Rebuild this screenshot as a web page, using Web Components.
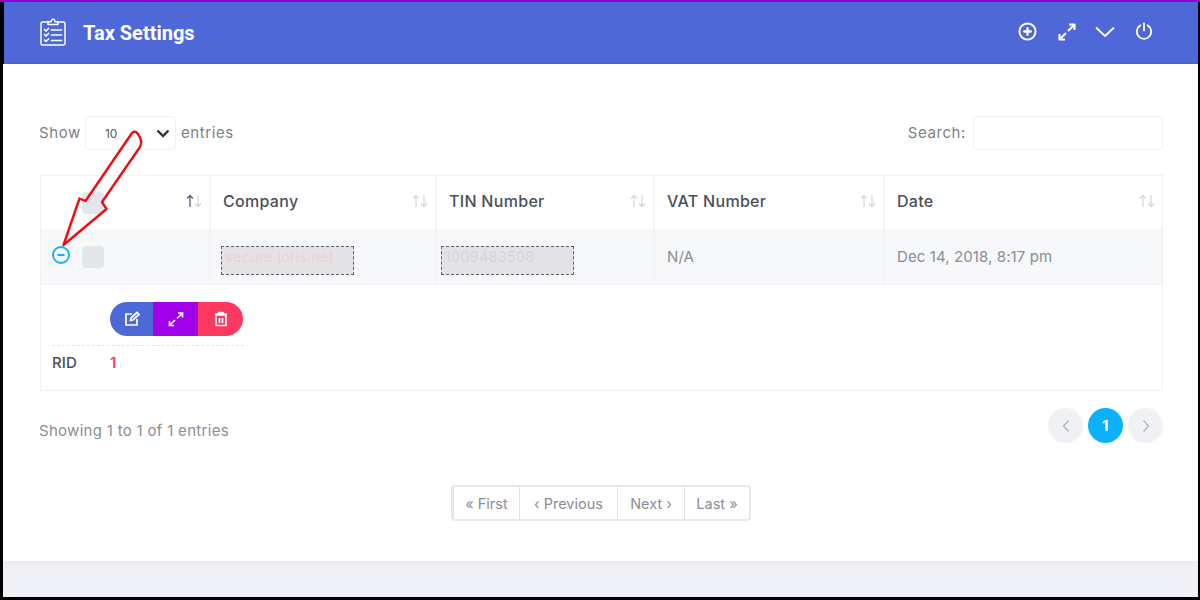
<!DOCTYPE html>
<html>
<head>
<meta charset="utf-8">
<title>Tax Settings</title>
<style>
  html, body { margin: 0; padding: 0; background: #000; }
  body { font-family: Inter, "Liberation Sans", sans-serif; width: 1200px; height: 600px; overflow: hidden; }
</style>
</head>
<body>
<app-frame>
  <panel-header slot="header" title="Tax Settings"></panel-header>
  <data-toolbar></data-toolbar>
  <tax-table></tax-table>
  <table-info></table-info>
  <pager-links></pager-links>
  <red-arrow></red-arrow>
</app-frame>

<script>
class AppFrame extends HTMLElement {
  constructor() {
    super();
    this.attachShadow({ mode: 'open' });
  }

  connectedCallback() {
    this.shadowRoot.innerHTML = `
      <style>
        :host {
          display: flex;
          flex-direction: column;
          position: relative;
          box-sizing: border-box;
          width: 1200px;
          height: 600px;
          padding: 2px 2px 3px 3px;
          background: #000;
        }
        .line {
          position: absolute;
          left: 0;
          right: 0;
          top: 0;
          height: 2px;
          background: #9000d0;
        }
        .content {
          flex: 1;
          background: #fff;
          padding: 52px 36px 0 36px;
        }
        .footer {
          height: 36px;
          background: linear-gradient(#eceef3, #f0f1f6 6px);
        }
      </style>
      <div class="line"></div>
      <slot name="header"></slot>
      <div class="content"><slot></slot></div>
      <div class="footer"></div>
    `;
  }
}

class PanelHeader extends HTMLElement {
  constructor() {
    super();
    this.attachShadow({ mode: 'open' });
  }

  connectedCallback() {
    const title = this.getAttribute('title') || '';
    this.shadowRoot.innerHTML = `
      <style>
        :host {
          display: flex;
          align-items: center;
          box-sizing: border-box;
          height: 62px;
          margin-left: 1px;
          padding: 0 45px 2px 36px;
          background: #4e68d8;
          color: #fff;
          border-bottom: 1px solid #4a5fd0;
        }
        h1 {
          margin: 2px 0 0 17px;
          font: 700 20px Roboto, "Liberation Sans", sans-serif;
          flex: 1;
        }
        svg { display: block; fill: none; stroke: #fff; stroke-linecap: round; stroke-linejoin: round; }
        .tools { display: flex; align-items: center; }
      </style>
      <svg width="26" height="28" viewBox="0 0 26 28" stroke-width="1.5">
        <path d="M8 4H2.5A1.5 1.5 0 0 0 1 5.5v20A1.5 1.5 0 0 0 2.5 27h21a1.5 1.5 0 0 0 1.500-1.500v-20A1.500 1.500 0 0 0 23.500 4H18"/>
        <path d="M8 6.500V4l3-.5C11.500 1.500 12 1 13 1s1.500.5 2 2.500l3 .5v2.500z"/>
        <path d="M4.500 11.500l1.500 1.500 2.500-2.500M4.500 16.500l1.500 1.500 2.500-2.500M4.500 22l1.500 1.500 2.500-2.500M11.500 12h10M11.500 17h10M11.500 22.500h10" stroke-width="1.700"/>
      </svg>
      <h1>${title}</h1>
      <div class="tools">
        <svg width="19" height="19" viewBox="0 0 20 20" stroke-width="2" style="margin-right:21px">
          <circle cx="10" cy="10" r="8.500"/><path d="M10 6.500v7M6.500 10h7" stroke-width="2.400"/>
        </svg>
        <svg width="18" height="18" viewBox="0 0 18 18" stroke-width="2.100" style="margin-right:19px">
          <path d="M11 1.500h5.500V7M16.500 1.500l-6.500 6.500M7 16.500H1.500V11M1.500 16.500L8 10" stroke-linecap="butt"/>
        </svg>
        <svg width="20" height="12" viewBox="0 0 20 12" stroke-width="1.800" style="margin-right:20px">
          <path d="M1.500 2l8.500 8 8.500-8"/>
        </svg>
        <svg width="18" height="19" viewBox="0 0 20 20" stroke-width="2">
          <path d="M6 3.200a8 8 0 1 0 8 0M10 1v8"/>
        </svg>
      </div>
    `;
  }
}

class DataToolbar extends HTMLElement {
  constructor() {
    super();
    this.attachShadow({ mode: 'open' });
  }

  connectedCallback() {
    this.shadowRoot.innerHTML = `
      <style>
        :host {
          display: flex;
          align-items: center;
          justify-content: space-between;
          margin-right: -1px;
          font-size: 15px;
          letter-spacing: .6px;
          color: #7c7f88;
        }
        .group { display: flex; align-items: center; }
        .group span { margin-top: -2px; }
        .select {
          box-sizing: border-box;
          display: flex;
          align-items: center;
          justify-content: space-between;
          width: 91px;
          height: 34px;
          margin: 0 5px 0 4px;
          padding: 0 5px 0 19px;
          border: 1px solid #eef0f4;
          border-radius: 4px;
          font-size: 12px;
          letter-spacing: 0;
          color: #555a66;
        }
        .select svg { display: block; fill: none; stroke: #30343c; stroke-width: 2.400; }
        .input {
          box-sizing: border-box;
          width: 190px;
          height: 34px;
          margin-left: 7px;
          border: 1px solid #eef0f4;
          border-radius: 4px;
        }
      </style>
      <div class="group">
        <span>Show</span>
        <div class="select">10
          <svg width="14" height="9" viewBox="0 0 14 9"><path d="M1.500 1.500L7 7l5.500-5.500"/></svg>
        </div>
        <span>entries</span>
      </div>
      <div class="group">
        <span>Search:</span>
        <div class="input"></div>
      </div>
    `;
  }
}

class SortIcon extends HTMLElement {
  constructor() {
    super();
    this.attachShadow({ mode: 'open' });
  }

  connectedCallback() {
    const up = this.hasAttribute('active') ? '#5a5f70' : '#d3d7df';
    this.shadowRoot.innerHTML = `
      <style>
        :host { display: block; margin-left: auto; }
        svg { display: block; fill: none; stroke-width: 1.300; }
      </style>
      <svg width="16" height="14" viewBox="0 0 16 14">
        <path d="M4 13V1.500M1 4.500L4 1.500 7 4.500" stroke="${up}"/>
        <path d="M12 1v11.500M9 9.500l3 3 3-3" stroke="#d3d7df"/>
      </svg>
    `;
  }
}

class MaskedText extends HTMLElement {
  constructor() {
    super();
    this.attachShadow({ mode: 'open' });
  }

  connectedCallback() {
    this.shadowRoot.innerHTML = `
      <style>
        :host {
          display: block;
          box-sizing: border-box;
          width: 133px;
          height: 29px;
          margin: 7px 0 0 -2px;
          padding: 1px 0 0 3px;
          border: 1px dashed #60626a;
          background: #e3e3e5;
          font-size: 14.500px;
          letter-spacing: .2px;
          white-space: nowrap;
          overflow: hidden;
        }
        span { display: inline-block; filter: blur(.6px); }
      </style>
      <span><slot></slot></span>
    `;
  }
}

class TaxTable extends HTMLElement {
  constructor() {
    super();
    this.attachShadow({ mode: 'open' });
  }

  connectedCallback() {
    const heads = ['Company', 'TIN Number', 'VAT Number', 'Date'];
    this.shadowRoot.innerHTML = `
      <style>
        :host {
          display: block;
          margin: 25px -1px 0 1px;
          border: 1px solid #f0f1f5;
          color: #8a8d96;
          font-size: 15px;
          letter-spacing: .1px;
        }
        .row {
          display: grid;
          grid-template-columns: 168px 226px 218px 230px 1fr;
        }
        .cell {
          box-sizing: border-box;
          display: flex;
          align-items: center;
          padding: 0 7px 0 12px;
          border-left: 2px solid #f5f6f9;
        }
        .cell:first-child { border-left: 0; }
        .head .cell {
          height: 53px;
          font-size: 16px;
          font-weight: 500;
          letter-spacing: .3px;
          color: #4b4f5c;
          padding-bottom: 4px;
        }
        .head .first { padding-left: 41px; }
        .body { background: #f7f8fa; }
        .body .cell { height: 55px; border-left-color: #f3f4f7; }
        .body .tin { padding-left: 6px; }
        .box {
          width: 22px;
          height: 22px;
          border-radius: 4px;
          background: #e3e7ed;
        }
        .minus { display: block; margin: -4px 12px 0 -1px; }
        .detail { height: 106px; box-sizing: border-box; padding: 17px 0 0 11px; border-top: 1px solid #f3f4f7; }
        .actions {
          display: flex;
          width: 133px;
          height: 34px;
          margin-left: 58px;
          border-radius: 17px;
          overflow: hidden;
        }
        .actions div { display: flex; align-items: center; justify-content: center; }
        .actions svg { display: block; fill: none; stroke: #fff; stroke-width: 1.700; }
        .rule { width: 192px; margin-top: 9px; border-top: 1px dashed #e3e4e8; }
        .rid { display: flex; padding-top: 7px; font-size: 15px; color: #4b4f5c; font-weight: 500; }
        .rid b { margin-left: 33px; font-weight: 600; color: #ff3860; }
      </style>
      <div class="row head">
        <div class="cell first"><div class="box" style="margin-top:5px"></div><sort-icon active></sort-icon></div>
        ${heads.map((h) => `<div class="cell">${h}<sort-icon></sort-icon></div>`).join('')}
      </div>
      <div class="row body">
        <div class="cell first">
          <svg class="minus" width="18" height="18" viewBox="0 0 18 18" fill="none" stroke="#0bb2fb">
            <circle cx="9" cy="9" r="8" stroke-width="1.800"/><path d="M5.500 9h7" stroke-width="2.200"/>
          </svg>
          <div class="box"></div>
        </div>
        <div class="cell"><masked-text style="color:#ecd0d7">secure.jofis.net</masked-text></div>
        <div class="cell tin"><masked-text style="color:#d2d5df">1009483508</masked-text></div>
        <div class="cell">N/A</div>
        <div class="cell">Dec 14, 2018, 8:17 pm</div>
      </div>
      <div class="detail">
        <div class="actions">
          <div style="width:43px;background:#4d69d8">
            <svg width="16" height="16" viewBox="0 0 16 16"><path d="M8 3H2v11h11V8M6.500 9.500l.5-2.500 6-5.500 2 2-6 5.500z"/></svg>
          </div>
          <div style="width:45px;background:#a200e8">
            <svg width="16" height="16" viewBox="0 0 16 16"><path d="M10 2h4.500v4.500M14.500 2L9 7.500M6 14.500H1.500V10M1.500 14.500L7 9"/></svg>
          </div>
          <div style="width:45px;background:#ff3860">
            <svg width="14" height="16" viewBox="0 0 14 16"><path d="M2 4h10v10.500H2zM1 3h12M5 3V1.500h4V3M5.500 7v5M8.500 7v5"/></svg>
          </div>
        </div>
        <div class="rule"></div>
        <div class="rid">RID<b>1</b></div>
      </div>
    `;
  }
}

class TableInfo extends HTMLElement {
  constructor() {
    super();
    this.attachShadow({ mode: 'open' });
  }

  connectedCallback() {
    this.shadowRoot.innerHTML = `
      <style>
        :host {
          display: flex;
          align-items: center;
          margin: 17px -1px 0 0;
          font-size: 15px;
          letter-spacing: .3px;
          color: #8a8d96;
        }
        .text { padding-top: 9px; }
        .pages { display: flex; gap: 5px; margin-left: auto; }
        .page {
          display: flex;
          align-items: center;
          justify-content: center;
          width: 35px;
          height: 35px;
          border-radius: 50%;
          background: #f0f1f5;
        }
        .on { background: #0bb2fb; color: #fff; font-weight: 700; }
        svg { display: block; fill: none; stroke: #b5b8c0; stroke-width: 1.400; }
      </style>
      <span class="text">Showing 1 to 1 of 1 entries</span>
      <div class="pages">
        <div class="page"><svg width="10" height="14" viewBox="0 0 10 14"><path d="M7.500 1.500L2.500 7l5 5.500"/></svg></div>
        <div class="page on">1</div>
        <div class="page"><svg width="10" height="14" viewBox="0 0 10 14"><path d="M2.500 1.500L7.500 7l-5 5.500"/></svg></div>
      </div>
    `;
  }
}

class PagerLinks extends HTMLElement {
  constructor() {
    super();
    this.attachShadow({ mode: 'open' });
  }

  connectedCallback() {
    const links = [['« First', 66], ['‹ Previous', 98], ['Next ›', 67], ['Last »', 65]];
    this.shadowRoot.innerHTML = `
      <style>
        :host {
          display: flex;
          box-sizing: border-box;
          width: 300px;
          height: 36px;
          margin: 42px 0 0 412px;
          border: 2px solid #e6e8ee;
          border-radius: 4px;
          font-size: 14.500px;
          color: #8a8d96;
        }
        div {
          box-sizing: border-box;
          display: flex;
          align-items: center;
          justify-content: center;
          border-left: 1px solid #e0e3ea;
        }
        div:first-child { border-left: 0; }
      </style>
      ${links.map((l) => `<div style="width:${l[1]}px">${l[0]}</div>`).join('')}
    `;
  }
}

class RedArrow extends HTMLElement {
  constructor() {
    super();
    this.attachShadow({ mode: 'open' });
  }

  connectedCallback() {
    this.shadowRoot.innerHTML = `
      <style>
        :host { position: absolute; left: 0; top: 0; width: 200px; height: 260px; pointer-events: none; }
        svg { display: block; }
      </style>
      <svg width="200" height="260" viewBox="0 0 200 260" fill="none" stroke="#f00c10" stroke-width="2.400" stroke-linejoin="round">
        <path d="M63.500 245L79.500 198.500 85.500 201 132 133Q135 130 138 134 143 141 140 147L102 202 106.500 209z"/>
      </svg>
    `;
  }
}

customElements.define('app-frame', AppFrame);
customElements.define('panel-header', PanelHeader);
customElements.define('data-toolbar', DataToolbar);
customElements.define('sort-icon', SortIcon);
customElements.define('masked-text', MaskedText);
customElements.define('tax-table', TaxTable);
customElements.define('table-info', TableInfo);
customElements.define('pager-links', PagerLinks);
customElements.define('red-arrow', RedArrow);
</script>
</body>
</html>
